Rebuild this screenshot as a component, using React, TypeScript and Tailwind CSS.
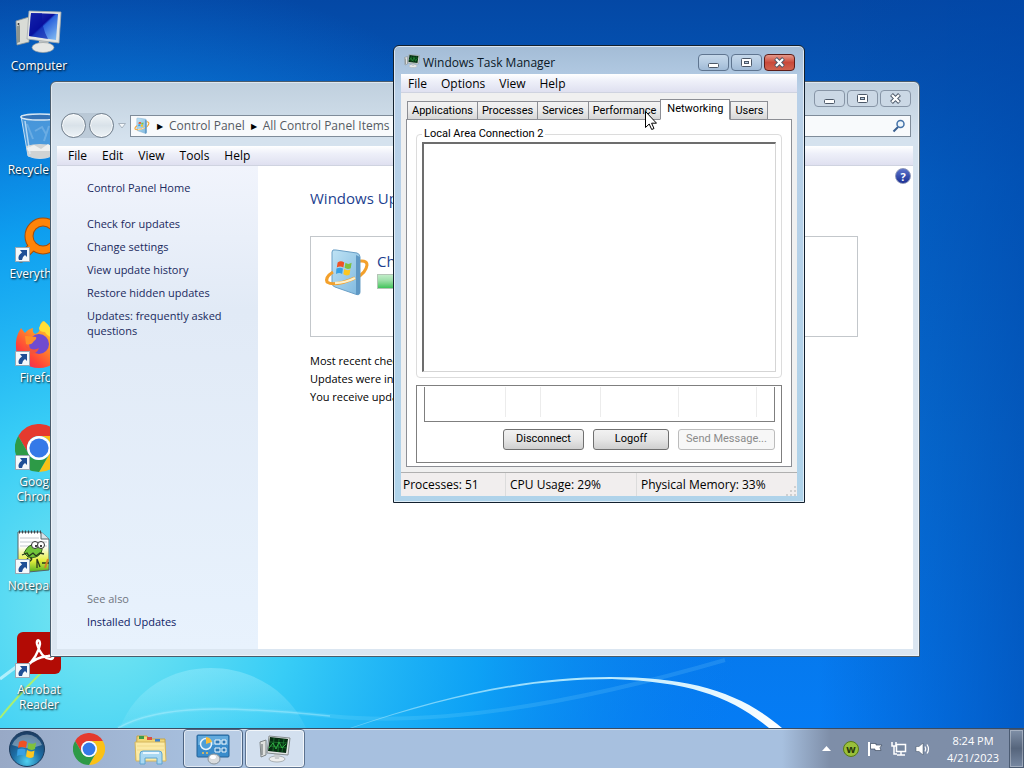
import React, { useState } from 'react';
import { clsx } from 'clsx';

interface IconProps {
  className?: string;
}

const ChromeIcon = ({ className }: IconProps) => (
  <svg viewBox="0 0 48 48" className={className} aria-hidden="true">
    <path d="M3.2 12A24 24 0 0 1 44.8 12H24A12 12 0 0 0 13.6 30Z" fill="#e53a2e" />
    <path d="M44.8 12A24 24 0 0 1 24 48L34.4 30A12 12 0 0 0 24 12Z" fill="#fbc116" />
    <path d="M24 48A24 24 0 0 1 3.2 12L13.6 30A12 12 0 0 0 34.4 30Z" fill="#2d9a47" />
    <circle cx="24" cy="24" r="12" fill="#fff" />
    <circle cx="24" cy="24" r="9.6" fill="#3579e8" />
  </svg>
);

const ComputerIcon = ({ className }: IconProps) => (
  <svg viewBox="0 0 48 48" className={className} aria-hidden="true">
    <defs>
      <linearGradient id="screen" x1="0" y1="0" x2="1" y2="1">
        <stop offset="0" stopColor="#2438b8" />
        <stop offset=".45" stopColor="#0a0f9c" />
        <stop offset=".5" stopColor="#2a62dc" />
        <stop offset="1" stopColor="#8cc4f4" />
      </linearGradient>
    </defs>
    <path d="M1 13L14 9V34L2 37Z" fill="#d9dcd6" stroke="#8d9596" strokeWidth=".8" />
    <path d="M2 18L5 17V34L2 35Z" fill="#8d958f" />
    <circle cx="3.5" cy="16" r="1" fill="#333" />
    <path d="M23 30L34 32L33 38H25Z" fill="#c4c8ca" />
    <ellipse cx="28" cy="39.5" rx="11" ry="5" fill="#e6e7e5" stroke="#9ba0a2" strokeWidth=".7" />
    <path d="M14 3L46 4L44 35L12 31Z" fill="#e3e5e3" stroke="#a2a9ad" strokeWidth=".8" />
    <path d="M16 5L43 6L41 32L14 28Z" fill="url(#screen)" />
    <path d="M16 5L27 5Q26 18 33 31L14 28Z" fill="#0512a0" opacity=".55" />
  </svg>
);

const RecycleIcon = ({ className }: IconProps) => (
  <svg viewBox="0 0 48 48" className={className} aria-hidden="true">
    <path d="M6 4H44L37 44Q25 49 13 44Z" fill="#6aa7dd" fillOpacity=".65" stroke="#c4def2" />
    <ellipse cx="25" cy="5" rx="19" ry="3" fill="#3473b7" stroke="#d5e6f3" strokeWidth="1.5" />
    <path d="M11 34Q25 30 39 34L37 44Q25 49 13 44Z" fill="#cfd3d4" />
    <path d="M12 36L19 33L26 37L33 32L39 36L37 39H13Z" fill="#eef0ef" />
    <path d="M12 12L18 27M34 14L29 29M20 19L27 15L31 22" stroke="#b9dbf4" strokeWidth="2" opacity=".3" fill="none" />
    <path d="M10 9L15 42" stroke="#e1f1fc" strokeWidth="1.5" opacity=".7" />
  </svg>
);

const EverythingIcon = ({ className }: IconProps) => (
  <svg viewBox="0 0 48 48" className={className} aria-hidden="true">
    <circle cx="28" cy="20" r="14" fill="none" stroke="#a74d08" strokeWidth="9" />
    <path d="M17 31L6 42" stroke="#a74d08" strokeWidth="9" strokeLinecap="round" />
    <circle cx="28" cy="20" r="14" fill="none" stroke="#ff8408" strokeWidth="7" />
    <path d="M17 31L6 42" stroke="#ff8408" strokeWidth="7" strokeLinecap="round" />
  </svg>
);

const FirefoxIcon = ({ className }: IconProps) => (
  <svg viewBox="0 0 48 48" className={className} aria-hidden="true">
    <defs>
      <linearGradient id="fox" x1="1" y1="0" x2=".1" y2="1">
        <stop offset="0" stopColor="#fff04a" />
        <stop offset=".4" stopColor="#ff9a28" />
        <stop offset=".75" stopColor="#ff4637" />
        <stop offset="1" stopColor="#e3206e" />
      </linearGradient>
    </defs>
    <path d="M28 1Q34 5 36 11Q47 17 47 28A23 20 0 0 1 1 28Q0 17 6 8L10 13Q13 9 18 8Q17 12 20 14Q24 13 25 9Q24 4 28 1Z" fill="url(#fox)" />
    <circle cx="24" cy="24" r="10" fill="#704bd0" />
    <path d="M10 16Q14 16 21 17Q22 19 19 21Q16 26 11 24Z" fill="#ff9028" />
    <path d="M10 25Q18 32 24 28Q21 36 13 33Z" fill="#f2543c" />
    <path d="M29 1Q38 8 38 18Q32 16 30 12Q24 12 24 8Q25 4 29 1Z" fill="#ffdf35" />
  </svg>
);

const NotepadIcon = ({ className }: IconProps) => (
  <svg viewBox="0 0 48 48" className={className} aria-hidden="true">
    <defs>
      <linearGradient id="note" x1="0" y1="0" x2="0" y2="1">
        <stop offset=".35" stopColor="#fff" />
        <stop offset=".7" stopColor="#e4ee3d" />
        <stop offset="1" stopColor="#46aa20" />
      </linearGradient>
    </defs>
    <path d="M3 4H26L34 11V42L3 45Z" fill="url(#note)" stroke="#54646a" />
    <path d="M26 4V11H34" fill="#d8e3e9" stroke="#54646a" />
    <path d="M4 4H26" stroke="#3d474b" strokeWidth="3" strokeDasharray="1 2" />
    <path d="M5 10H24M5 14H32M5 18H32" stroke="#c3cace" />
    <path d="M9 25Q14 15 20 17Q30 17 26 25Q22 31 13 29Z" fill="#70c43a" stroke="#2e5f18" />
    <circle cx="20" cy="17" r="3.5" fill="#fff" stroke="#333" />
    <circle cx="26" cy="17" r="3.5" fill="#fff" stroke="#333" />
    <circle cx="21" cy="18" r="1" />
    <circle cx="26" cy="18" r="1" />
    <path d="M7 27L12 25L14 28L18 25L21 28L25 25L29 26M13 30Q9 35 14 34Q19 30 15 30M22 40V31L25 39M27 35H34" fill="none" stroke="#27381d" strokeWidth="1.3" />
    <path d="M33 31L30 40" stroke="#d58128" strokeWidth="2" />
  </svg>
);

const AcrobatIcon = ({ className }: IconProps) => (
  <svg viewBox="0 0 48 48" className={className} aria-hidden="true">
    <rect x="2" y="0" width="44" height="42" rx="6" fill="#b20b05" />
    <path
      d="M12 34C18 29 24 20 25 12C25 7 21 7 22 12C24 20 29 27 36 27C40 26 38 23 33 24C25 25 18 27 12 34Z"
      fill="none"
      stroke="#fff"
      strokeWidth="2.4"
      strokeLinejoin="round"
    />
  </svg>
);

const FlagPanes = () => (
  <>
    <path d="M2 3Q6 0 10 3L9 9Q5 7 1 9Z" fill="#ef5124" />
    <path d="M11.500 3.500Q15 6 19 3.500L18 10Q14 12 10.500 9.500Z" fill="#7fc13d" />
    <path d="M.5 10.500Q5 8.500 8.500 10.500L7.500 17Q4 15 0 17Z" fill="#37a0e4" />
    <path d="M10 11Q13.500 13.500 17.500 11.500L16.500 18Q12.500 20 9 17.500Z" fill="#fdc61f" />
  </>
);

const UpdateIcon = ({ className }: IconProps) => (
  <svg viewBox="0 0 48 52" className={className} aria-hidden="true">
    <defs>
      <linearGradient id="box" x1="0" y1="0" x2="1" y2="1">
        <stop offset="0" stopColor="#bfe3f5" />
        <stop offset="1" stopColor="#7fb8de" />
      </linearGradient>
    </defs>
    <path d="M32 15Q44 12 44 18Q43 26 33 31" fill="none" stroke="#f3a02b" strokeWidth="3" />
    <path d="M9 5Q9 2 13 3L34 6Q37 7 37 10V45Q37 49 32 47L12 40Q9 39 9 36Z" fill="url(#box)" stroke="#6a9fc6" />
    <path d="M37 10V45Q37 48 33 48V8Z" fill="#5f98c4" />
    <g transform="translate(13 13) scale(.82)"><FlagPanes /></g>
    <path d="M10 25Q2 30 4 35Q11 40 32 31" fill="none" stroke="#f3a02b" strokeWidth="3" />
    <path d="M12 36Q22 36 32 31" fill="none" stroke="#fff0c8" strokeWidth="2.5" />
  </svg>
);

const TaskMonitorIcon = ({ className }: IconProps) => (
  <svg viewBox="0 0 32 28" className={className} aria-hidden="true">
    <path d="M1 7L7 5V20L2 22Z" fill="#dfe1df" stroke="#7d8486" />
    <path d="M3 9V20" stroke="#5f6769" />
    <ellipse cx="18" cy="24" rx="8" ry="3" fill="#eceded" stroke="#92989a" strokeWidth=".7" />
    <path d="M15 19H21L20 24H16Z" fill="#c8ccce" />
    <path d="M10 1L31 3L29 20L8 18Z" fill="#e3e6e6" stroke="#868d90" />
    <path d="M11 2L29 4L27 18L9 16Z" fill="#062e12" />
    <path d="M11 7L28 8M11 11L28 13M15 3L14 16M20 4L19 17M25 4L23 17" stroke="#1f7a32" strokeWidth=".8" />
    <path d="M10 13L14 8L17 14L20 7L23 13L27 9" fill="none" stroke="#2fae42" strokeWidth="1" />
  </svg>
);

const ExplorerIcon = ({ className }: IconProps) => (
  <svg viewBox="0 0 34 32" className={className} aria-hidden="true">
    <path d="M3 3H13L15 6H31V27H2Z" fill="#f1d878" stroke="#c7a445" />
    <path d="M5 3H10V6H5Z" fill="#3c9c48" />
    <path d="M13 4H18V7H13Z" fill="#d95042" />
    <path d="M21 6H26V9H21Z" fill="#3e83ce" />
    <path d="M1 9H31L32 28H2Z" fill="#fbeaa5" stroke="#d5b65c" />
    <path d="M3 13H30M3 17H30" stroke="#f0d98a" />
    <path d="M6 31V21Q6 18 9 18H25Q28 18 28 21V31H23V25H11V31Z" fill="#a9d8f2" stroke="#5da4d0" />
    <path d="M9 20H25" stroke="#e9f7ff" strokeWidth="2" />
  </svg>
);

const ControlPanelIcon = ({ className }: IconProps) => (
  <svg viewBox="0 0 34 32" className={className} aria-hidden="true">
    <rect x="1" y="2" width="32" height="22" rx="1" fill="#3a8ccb" stroke="#226196" />
    <rect x="2" y="3" width="30" height="9" fill="#62aadd" />
    <circle cx="10" cy="11" r="5.500" fill="#4d9fd8" stroke="#e6f4fd" strokeWidth="1.500" />
    <path d="M10 11V4A7 7 0 0 1 16 9Z" fill="#f6bc3c" />
    <path d="M19 7H24V11H19ZM26 7H30V11H26ZM19 15H24V19H19ZM26 15H30V19H26Z" fill="#2d78b5" stroke="#eff8fe" />
    <circle cx="7" cy="20" r="1" fill="#f8c24c" />
    <circle cx="11" cy="20" r="1" fill="#f8c24c" />
    <ellipse cx="18" cy="26" rx="6" ry="5" fill="#d9dcde" stroke="#8b959c" />
    <ellipse cx="17" cy="24" rx="3" ry="2" fill="#fff" />
  </svg>
);

const ShortcutArrow = () => (
  <svg viewBox="0 0 15 15" className="absolute bottom-0.5 left-0 size-[15px]" aria-hidden="true">
    <rect x=".5" y=".5" width="14" height="14" fill="#f5f8fb" stroke="#9aa9b5" />
    <path d="M5 3H12V10L10 8Q7 10 7 13H4Q2 9 7 5.500Z" fill="#1f4f96" />
  </svg>
);

const StartOrb = () => (
  <svg viewBox="0 0 38 38" className="size-[38px]" aria-hidden="true">
    <defs>
      <radialGradient id="orb" cx=".5" cy=".85" r=".8">
        <stop offset="0" stopColor="#4fd0f0" />
        <stop offset=".5" stopColor="#1c6da5" />
        <stop offset="1" stopColor="#1d3f66" />
      </radialGradient>
    </defs>
    <circle cx="19" cy="19" r="17.500" fill="url(#orb)" stroke="#1b3a5c" />
    <path d="M4 15A16 16 0 0 1 34 15Q19 21 4 15Z" fill="#fff" opacity=".35" />
    <g transform="translate(9 9)"><FlagPanes /></g>
  </svg>
);

const Wallpaper = () => (
  <svg viewBox="0 0 1024 728" preserveAspectRatio="none" className="absolute inset-0 size-full" aria-hidden="true">
    <defs>
      <linearGradient id="sky" x1="0" y1="0" x2="0" y2="1">
        <stop offset="0" stopColor="#0448a5" />
        <stop offset=".25" stopColor="#0562c6" />
        <stop offset=".6" stopColor="#0872d8" />
        <stop offset="1" stopColor="#057cf5" />
      </linearGradient>
      <radialGradient id="glow" gradientUnits="userSpaceOnUse" cx="100" cy="610" r="640">
        <stop offset="0" stopColor="#7be8f0" />
        <stop offset=".3" stopColor="#38cdf6" />
        <stop offset=".6" stopColor="#0fa8f6" stopOpacity=".85" />
        <stop offset="1" stopColor="#0a7ce8" stopOpacity="0" />
      </radialGradient>
      <linearGradient id="shade" x1="0" y1="0" x2="1" y2="0">
        <stop offset=".8" stopColor="#0046a8" stopOpacity="0" />
        <stop offset="1" stopColor="#0046a8" stopOpacity=".6" />
      </linearGradient>
      <linearGradient id="beam" x1="0" y1="0" x2="1" y2="0">
        <stop offset="0" stopColor="#bff0ff" stopOpacity=".4" />
        <stop offset=".5" stopColor="#bff0ff" stopOpacity=".9" />
        <stop offset="1" stopColor="#fff" />
      </linearGradient>
      <linearGradient id="bubble" x1="0" y1="0" x2="0" y2="1">
        <stop offset="0" stopColor="#b5f3ff" stopOpacity=".35" />
        <stop offset="1" stopColor="#b5f3ff" stopOpacity=".08" />
      </linearGradient>
    </defs>
    <rect width="1024" height="728" fill="url(#sky)" />
    <rect width="1024" height="728" fill="url(#glow)" />
    <rect width="1024" height="728" fill="url(#shade)" />
    <path d="M120 728C150 648 270 648 306 728Z" fill="url(#bubble)" />
    <path d="M118 728C160 704 230 706 330 716S560 708 725 660" fill="none" stroke="#9fe8ff" strokeWidth="4" opacity=".15" />
    <path d="M118 728C160 704 230 706 330 716" fill="none" stroke="#bff2ff" strokeWidth="1.500" opacity=".4" />
    <path d="M350 728C450 694 530 677 610 677C690 677 740 692 782 728H769C730 696 690 682 612 679C530 679 452 695 352 728Z" fill="url(#beam)" />
    <path d="M0 718Q22 690 58 657" fill="none" stroke="#a8ef72" strokeWidth="2" />
    <path d="M0 679L52 640" fill="none" stroke="#d8faff" strokeWidth="3" opacity=".7" />
  </svg>
);

const desktopIcons = [
  { label: 'Computer', Icon: ComputerIcon, shortcut: false },
  { label: 'Recycle Bin', Icon: RecycleIcon, shortcut: false },
  { label: 'Everything', Icon: EverythingIcon, shortcut: true },
  { label: 'Firefox', Icon: FirefoxIcon, shortcut: true },
  { label: 'Google Chrome', Icon: ChromeIcon, shortcut: true },
  { label: 'Notepad++', Icon: NotepadIcon, shortcut: true },
  { label: 'Acrobat Reader', Icon: AcrobatIcon, shortcut: true }
];

const tasks = ['Check for updates', 'Change settings', 'View update history', 'Restore hidden updates', 'Updates: frequently asked questions'];

const tabs = ['Applications', 'Processes', 'Services', 'Performance', 'Networking', 'Users'];

const WindowButtons = ({ active = false }: { active?: boolean }) => {
  const base = 'flex h-[17px] w-[31px] items-center justify-center rounded-sm border';
  const plain = active
    ? 'border-[#5f7590] bg-linear-to-b from-[#c5d8ea] via-[#b5cbe2] via-50% to-[#a0bad6]'
    : 'border-[#8795a6] bg-[#cbd8e5]';
  return (
    <div className="flex gap-0.5">
      <button aria-label="Minimize" className={clsx(base, plain)}>
        <svg viewBox="0 0 13 11" className="h-[11px] w-[13px]">
          <rect x="1.500" y="6.500" width="10" height="4" rx="1" fill="#fff" stroke="#4c5868" />
        </svg>
      </button>
      <button aria-label="Maximize" className={clsx(base, plain)}>
        <svg viewBox="0 0 13 11" className="h-[11px] w-[13px]">
          <rect x="1.500" y="1.500" width="10" height="8" rx="1" fill="#fff" stroke="#4c5868" />
          <rect x="4.500" y="4.500" width="4" height="2" fill="#b7cbe0" stroke="#4c5868" />
        </svg>
      </button>
      <button
        aria-label="Close"
        className={clsx(base, active ? 'border-[#5c1d18] bg-linear-to-b from-[#e5988a] via-[#c9493a] via-50% to-[#d0634f]' : plain)}
      >
        <svg viewBox="0 0 13 11" className="h-[11px] w-[13px]">
          <path d="M2.500 1.500L10.500 9.500M10.500 1.500L2.500 9.500" stroke="#4c5868" strokeWidth="4" />
          <path d="M3 2L10 9M10 2L3 9" stroke="#fff" strokeWidth="2.200" />
        </svg>
      </button>
    </div>
  );
};

const MenuBar = ({ items, className }: { items: string[]; className?: string }) => (
  <nav className={clsx('flex items-center border-b border-[#cfd3e0] bg-linear-to-b from-white via-[#eef0f9] via-40% to-[#dfe0f0]', className)}>
    {items.map((item) => (
      <button key={item} className="px-[7px] text-black">
        {item}
      </button>
    ))}
  </nav>
);

const ControlPanel = () => (
  <section
    aria-label="Windows Update"
    className="absolute top-[81px] left-[50px] flex h-[576px] w-[870px] flex-col rounded-t-md border border-[#4a5c6c] bg-linear-to-b from-[#c0d0de] via-[#d5e2ee] via-10% to-[#dbe6f1] px-1.5 pb-[7px] inset-ring inset-ring-white/50"
  >
    <div className="flex h-[31px] justify-end pt-2 pr-0.5">
      <WindowButtons />
    </div>
    <div className="flex h-[33px] items-start pt-0.5">
      <div className="-mt-0.5 ml-1 flex gap-[3px] rounded-full bg-[#aebccb]/60">
        <button aria-label="Back" className="size-[25px] rounded-full border border-[#72808e] bg-linear-to-b from-[#f1f5f8] via-[#d9e2e9] to-[#eef3f7] inset-ring inset-ring-white/70" />
        <button aria-label="Forward" className="size-[25px] rounded-full border border-[#72808e] bg-linear-to-b from-[#f1f5f8] via-[#d9e2e9] to-[#eef3f7] inset-ring inset-ring-white/70" />
      </div>
      <svg viewBox="0 0 8 6" className="mt-2 ml-1 h-1.5 w-2" aria-hidden="true">
        <path d="M.5 .5H7.500L4 5Z" fill="#f3f7fa" stroke="#a7b3bf" />
      </svg>
      <div className="ml-1 flex h-[22px] flex-1 items-center gap-1.5 border border-[#7f8c9a] bg-[#f8fafc] pl-0.5 text-[#555b63]">
        <UpdateIcon className="size-[18px]" />
        <span className="text-[8px] text-black">▶</span>
        <span>Control Panel</span>
        <span className="text-[8px] text-black">▶</span>
        <span>All Control Panel Items</span>
      </div>
      <div className="mr-0.5 ml-2 flex h-[22px] w-[250px] items-center border border-[#7f8c9a] bg-[#f8fafc] pr-1">
        <input aria-label="Search Control Panel" className="min-w-0 flex-1 outline-none" />
        <svg viewBox="0 0 14 14" className="size-3.5" aria-hidden="true">
          <path d="M6 8L1.500 12.500" stroke="#3a5f8f" strokeWidth="2" />
          <circle cx="8.500" cy="5" r="3.500" fill="#eef6fc" stroke="#4472a8" strokeWidth="1.500" />
        </svg>
      </div>
    </div>
    <MenuBar items={['File', 'Edit', 'View', 'Tools', 'Help']} className="h-5 gap-px pl-1" />
    <div className="flex min-h-0 flex-1 bg-white">
      <aside className="flex w-[201px] flex-col bg-linear-to-b from-[#f1f4fc] via-[#e1eaf6] via-30% to-[#e8f2fd] py-[14px] pl-[30px] text-[11px] leading-[15px] text-[#1a2a5e]">
        <a href="#home">Control Panel Home</a>
        <ul className="mt-[21px] flex w-[145px] flex-col gap-2">
          {tasks.map((task) => (
            <li key={task}>
              <a href="#task">{task}</a>
            </li>
          ))}
        </ul>
        <p className="mt-auto text-[#70767f]">See also</p>
        <a href="#installed" className="mt-2 mb-1.5 text-[#0f1c66]">
          Installed Updates
        </a>
      </aside>
      <main className="min-w-0 flex-1 pl-[52px] text-black">
        <h1 className="mt-5 h-[50px] text-[15px] leading-6 text-[#1d3f8f]">Windows Update</h1>
        <div className="flex h-[101px] border border-[#c3c7cb] pt-2.5 pl-3">
          <UpdateIcon className="h-[52px] w-12" />
          <div className="ml-1.5 pt-0.5">
            <h2 className="text-[15px] leading-6 text-[#1d3f8f]">Checking for updates...</h2>
            <div className="mt-px h-[15px] w-[300px] border border-[#b4c4b6] bg-linear-to-b from-[#c0ecc8] via-[#9fe0ab] via-40% to-[#3cc45a]" />
          </div>
        </div>
        <ul className="mt-[15px] text-[11px] leading-[18px]">
          <li>Most recent check for updates: Today at 8:21 PM</li>
          <li>Updates were installed: Today at 8:05 PM</li>
          <li>You receive updates: For Windows only</li>
        </ul>
      </main>
      <div className="w-[55px] pt-0.5 pr-0.5 text-right">
        <button
          aria-label="Help"
          className="size-4 rounded-full border border-[#8b95b8] bg-linear-to-b from-[#5c72ca] to-[#1d2f95] text-center text-[11px] leading-[13px] font-bold text-white"
        >
          ?
        </button>
      </div>
    </div>
  </section>
);

const TaskManager = () => {
  const [current, setCurrent] = useState('Networking');

  return (
    <section
      aria-label="Windows Task Manager"
      className="absolute top-[45px] left-[393px] flex h-[458px] w-[412px] flex-col rounded-t-md border border-[#12202e] bg-linear-to-b from-[#a3bcd6] via-[#b9d0e8] via-10% to-[#afd3ea] px-[7px] pb-1.5 inset-ring inset-ring-white/60"
    >
      <header className="flex h-[28px] items-start pt-2 pr-0.5 pl-[3px]">
        <TaskMonitorIcon className="h-3.5 w-4" />
        <h1 className="ml-[3px] flex-1 leading-[17px] text-[#0b1826]">Windows Task Manager</h1>
        <WindowButtons active />
      </header>
      <MenuBar items={['File', 'Options', 'View', 'Help']} className="h-[19px] pt-0.5" />
      <div className="flex min-h-0 flex-1 flex-col bg-[#f0f0f0] font-[Roboto,sans-serif] text-[11px] text-black">
        <div className="flex flex-1 flex-col px-[5px] pt-1.5 pb-[5px]">
          <div role="tablist" className="relative -mb-px flex h-[21px] items-end px-px">
            {tabs.map((tab) => (
              <button
                key={tab}
                role="tab"
                aria-selected={tab === current}
                onClick={() => setCurrent(tab)}
                className={clsx(
                  'border border-[#8c8e94] text-center leading-4',
                  tab === current ? 'h-[21px] border-b-white bg-white px-1.5 pb-0.5' : '-mr-px h-[19px] bg-linear-to-b from-[#f3f3f3] via-[#ebebeb] via-50% to-[#d6d6d6] px-1'
                )}
              >
                {tab}
              </button>
            ))}
          </div>
          <div role="tabpanel" className="flex flex-1 flex-col border border-[#8c8e94] bg-white px-[9px] pb-[3px]">
            <fieldset className="mt-1.5 h-[252px] rounded-sm border border-[#dcdcdc] px-[5px] pb-1">
              <legend className="px-0.5 leading-4">Local Area Connection 2</legend>
              <div className="h-[230px] border border-[#d5d5d5] border-t-2 border-t-[#6d6d6d] border-l-2 border-l-[#6d6d6d]" />
            </fieldset>
            <div className="mt-[7px] flex h-[78px] flex-col border border-[#7f7f7f] pr-1.5 pl-[7px]">
              <div className="mt-px grid h-[35px] grid-cols-[81px_35px_60px_78px_78px_1fr] border border-t-0 border-[#7f7f7f]">
                {[0, 1, 2, 3, 4].map((column) => (
                  <div key={column} className="mb-1 border-r border-[#ececec]" />
                ))}
              </div>
              <div className="mt-[7px] flex justify-end gap-[9px]">
                <button className="h-[21px] w-[81px] rounded-[3px] border border-[#707070] bg-linear-to-b from-[#f2f2f2] via-[#e6e6e6] via-50% to-[#cfcfcf]">
                  Disconnect
                </button>
                <button className="h-[21px] w-[76px] rounded-[3px] border border-[#707070] bg-linear-to-b from-[#f2f2f2] via-[#e6e6e6] via-50% to-[#cfcfcf]">
                  Logoff
                </button>
                <button disabled className="h-[21px] w-[97px] rounded-[3px] border border-[#bcbcbc] bg-[#f7f7f7] text-[#8b8b8b]">
                  Send Message...
                </button>
              </div>
            </div>
          </div>
        </div>
        <footer className="flex h-[25px] border-t border-[#b0b0b0] bg-[#f1eeee] font-['Open_Sans','Noto_Sans',sans-serif] text-xs leading-[23px]">
          <div className="w-[105px] border-r border-[#dcdcdc] pl-0.5">Processes: 51</div>
          <div className="w-[131px] border-r border-[#dcdcdc] pl-1">CPU Usage: 29%</div>
          <div className="flex-1 pl-1">Physical Memory: 33%</div>
          <svg viewBox="0 0 12 12" className="mt-auto size-3" aria-hidden="true">
            <path d="M9 2H11V4H9ZM9 6H11V8H9ZM5 6H7V8H5ZM9 10H11V12H9ZM5 10H7V12H5ZM1 10H3V12H1Z" fill="#d0d0d0" />
          </svg>
        </footer>
      </div>
    </section>
  );
};

const Taskbar = () => (
  <footer className="relative flex h-10 items-stretch border-t border-[#3a4c63] bg-linear-to-r from-[#98a9c6] via-[#a7c0df] via-20% to-[#a7c0df] to-75% text-white inset-shadow-[0_1px_0_#d2deea]">
    <button aria-label="Start" className="ml-2 flex items-center">
      <StartOrb />
    </button>
    <div className="ml-[13px] flex gap-0.5">
      <button aria-label="Google Chrome" className="flex w-[60px] items-center justify-center">
        <ChromeIcon className="size-8" />
      </button>
      <button aria-label="Windows Explorer" className="flex w-[60px] items-center justify-center">
        <ExplorerIcon className="h-8 w-[34px]" />
      </button>
      <button aria-label="Windows Update" className="flex w-[60px] items-center justify-center rounded-sm border border-[#4d6482] bg-white/20 inset-ring inset-ring-white/60">
        <ControlPanelIcon className="h-8 w-[34px]" />
      </button>
      <button aria-label="Windows Task Manager" className="flex w-[60px] items-center justify-center rounded-sm border border-[#5d7390] bg-white/50 inset-ring inset-ring-white/70">
        <TaskMonitorIcon className="h-7 w-8" />
      </button>
    </div>
    <div className="ml-auto flex items-center gap-2 bg-linear-to-r from-transparent to-[#7e8ea8] to-20% pl-10">
      <svg viewBox="0 0 9 5" className="mr-1 h-[5px] w-[9px]" aria-hidden="true">
        <path d="M0 5L4.500 0L9 5Z" fill="#fff" />
      </svg>
      <span className="flex size-4 items-center justify-center rounded-full border border-[#577b15] bg-[#9ac03a] text-[11px] leading-none font-bold text-[#26380a]">w</span>
      <svg viewBox="0 0 16 16" className="size-4" aria-hidden="true">
        <path d="M2 1V15" stroke="#fff" strokeWidth="2" />
        <path d="M3.500 2.500H9V4H15L13 6.500L14 9.500H8V8H3.500Z" fill="#fff" stroke="#3f4e62" strokeWidth=".7" />
      </svg>
      <svg viewBox="0 0 16 16" className="size-4" aria-hidden="true">
        <path d="M5.500 3.500H14.500V10.500H5.500Z" fill="#76879f" stroke="#fff" strokeWidth="1.500" />
        <path d="M10 11V14M6 14H14" stroke="#fff" strokeWidth="1.500" />
        <path d="M1 1V5H5V1M3 5V13H6" fill="none" stroke="#fff" strokeWidth="1.500" />
      </svg>
      <svg viewBox="0 0 16 16" className="size-4" aria-hidden="true">
        <path d="M1 5.500H4L8 2V14L4 10.500H1Z" fill="#fff" stroke="#3f4e62" strokeWidth=".5" />
        <path d="M10 5.500Q11.500 8 10 10.500M12 3.500Q15 8 12 12.500" fill="none" stroke="#fff" strokeWidth="1.200" />
      </svg>
      <time className="ml-1 w-[60px] text-center text-[11px] leading-[17px]">
        8:24 PM
        <br />
        4/21/2023
      </time>
      <button aria-label="Show desktop" className="-ml-0.5 h-full w-[15px] border border-[#4b5b72] bg-linear-to-b from-[#8090a8] via-[#56657c] to-[#7788a2] inset-ring inset-ring-white/30" />
    </div>
  </footer>
);

export default function App() {
  return (
    <div className="flex h-screen flex-col overflow-hidden bg-[#0562c6] font-['Open_Sans','Noto_Sans',sans-serif] text-xs">
      <div className="relative min-h-0 flex-1">
        <Wallpaper />
        <ul className="relative flex w-[78px] flex-col pt-1">
          {desktopIcons.map(({ label, Icon, shortcut }) => (
            <li key={label} className="flex h-[104px] flex-col items-center pt-1">
              <div className="relative size-12">
                <Icon className="size-12" />
                {shortcut && <ShortcutArrow />}
              </div>
              <span className="mt-0.5 w-[66px] text-center leading-[15px] text-white text-shadow-[1px_1px_2px_#000]">{label}</span>
            </li>
          ))}
        </ul>
        <ControlPanel />
        <TaskManager />
        <svg viewBox="0 0 12 19" className="absolute top-[111px] left-[645px] h-[19px] w-3" aria-hidden="true">
          <path d="M.5 .5V16.500L4.200 13L6.700 18.500L9 17.500L6.600 12.200H11.500Z" fill="#fff" stroke="#000" />
        </svg>
      </div>
      <Taskbar />
    </div>
  );
}
